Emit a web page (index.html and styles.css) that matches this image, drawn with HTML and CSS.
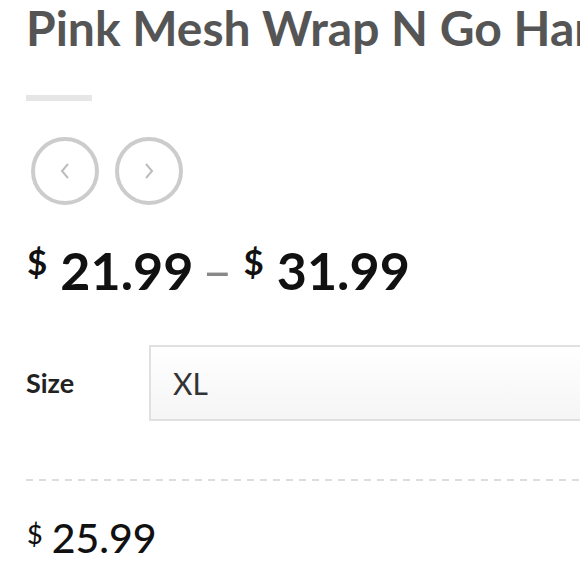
FILE: index.html
```html
<!DOCTYPE html>
<html lang="en">
<head>
<meta charset="utf-8">
<title>Pink Mesh Wrap N Go Harness</title>
<link rel="stylesheet" href="styles.css">
</head>
<body>
<main class="product">
  <h1 class="title">Pink Mesh Wrap N Go Harness</h1>
  <div class="title-bar"></div>
  <div class="nav">
    <button class="nav-btn" aria-label="Previous">
      <svg width="14" height="18" viewBox="0 0 14 18"><path d="M10 2 L4 9 L10 16" fill="none" stroke="#bdbdbd" stroke-width="2"/></svg>
    </button>
    <button class="nav-btn" aria-label="Next">
      <svg width="14" height="18" viewBox="0 0 14 18"><path d="M4 2 L10 9 L4 16" fill="none" stroke="#bdbdbd" stroke-width="2"/></svg>
    </button>
  </div>
  <div class="price-range">
    <span class="cur">$</span><span class="amt">21.99</span><span class="dash">–</span><span class="cur">$</span><span class="amt">31.99</span>
  </div>
  <div class="option-row">
    <span class="option-label">Size</span>
    <div class="option-select">XL</div>
  </div>
  <div class="divider"></div>
  <div class="price-single">
    <span class="cur-sm">$</span><span class="amt-sm">25.99</span>
  </div>
</main>
</body>
</html>
```
FILE: styles.css
```css
html, body {
  margin: 0;
  padding: 0;
  background: #ffffff;
  overflow: hidden;
}
body {
  width: 580px;
  height: 580px;
  font-family: Lato, "Open Sans", sans-serif;
}
.product {
  padding-left: 26px;
}
.title {
  margin: -1px 0 0 0;
  font-size: 48px;
  line-height: 1.2;
  font-weight: 700;
  color: #555555;
  white-space: nowrap;
  overflow: hidden;
}
.title-bar {
  width: 66px;
  height: 6px;
  background: #e6e6e6;
  margin-top: 38px;
}
.nav {
  display: flex;
  gap: 16px;
  margin-top: 36px;
  margin-left: 5px;
}
.nav-btn {
  width: 68px;
  height: 68px;
  border-radius: 50%;
  border: 4px solid #cccccc;
  background: #ffffff;
  padding: 0;
  display: flex;
  align-items: center;
  justify-content: center;
  box-sizing: border-box;
}
.price-range {
  margin-top: 26px;
  height: 60px;
  line-height: 60px;
  font-size: 52px;
  font-weight: 700;
  color: #111111;
  white-space: nowrap;
}
.cur {
  font-size: 35px;
  font-weight: 700;
  vertical-align: 15px;
  margin-left: 1px;
  margin-right: 13px;
}
.dash {
  font-weight: 400;
  color: #888888;
  margin: 0 10px 0 9px;
}
.option-row {
  display: flex;
  align-items: center;
  margin-top: 54px;
}
.option-label {
  flex: none;
  width: 123px;
  font-size: 27px;
  font-weight: 700;
  color: #222222;
}
.option-select {
  flex: none;
  width: 600px;
  height: 76px;
  box-sizing: border-box;
  border: 2px solid #e0e0e0;
  background: linear-gradient(#ffffff, #f5f5f5);
  padding-left: 22px;
  display: flex;
  align-items: center;
  font-size: 30px;
  color: #333333;
}
.divider {
  margin-top: 58px;
  height: 2px;
  background: repeating-linear-gradient(90deg, #dddddd 0 7px, transparent 7px 13px);
}
.price-single {
  margin-top: 28px;
  line-height: 50px;
  font-size: 41px;
  font-weight: 500;
  color: #111111;
  white-space: nowrap;
}
.cur-sm {
  font-size: 27px;
  vertical-align: 9px;
  margin-left: 1px;
  margin-right: 9px;
}
```
